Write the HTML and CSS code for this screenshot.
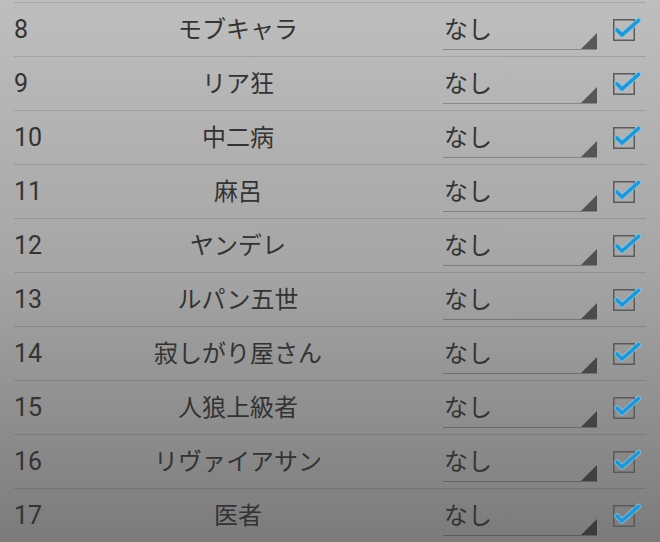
FILE: index.html
```html
<!DOCTYPE html>
<html lang="ja">
<head>
<meta charset="utf-8">
<link rel="stylesheet" href="styles.css">
</head>
<body>
<ul class="list">
  <li class="row"><span class="num">8</span><span class="name">モブキャラ</span><span class="select">なし</span><span class="check"><svg viewBox="0 0 22 22" width="22" height="22"><rect x="0.75" y="0.75" width="20.5" height="20.5"/><polyline class="glow" points="4,11 9,16 25.5,1.5"/><polyline class="mark" points="4,11 9,16 25.5,1.5"/></svg></span></li>
  <li class="row"><span class="num">9</span><span class="name">リア狂</span><span class="select">なし</span><span class="check"><svg viewBox="0 0 22 22" width="22" height="22"><rect x="0.75" y="0.75" width="20.5" height="20.5"/><polyline class="glow" points="4,11 9,16 25.5,1.5"/><polyline class="mark" points="4,11 9,16 25.5,1.5"/></svg></span></li>
  <li class="row"><span class="num">10</span><span class="name">中二病</span><span class="select">なし</span><span class="check"><svg viewBox="0 0 22 22" width="22" height="22"><rect x="0.75" y="0.75" width="20.5" height="20.5"/><polyline class="glow" points="4,11 9,16 25.5,1.5"/><polyline class="mark" points="4,11 9,16 25.5,1.5"/></svg></span></li>
  <li class="row"><span class="num">11</span><span class="name">麻呂</span><span class="select">なし</span><span class="check"><svg viewBox="0 0 22 22" width="22" height="22"><rect x="0.75" y="0.75" width="20.5" height="20.5"/><polyline class="glow" points="4,11 9,16 25.5,1.5"/><polyline class="mark" points="4,11 9,16 25.5,1.5"/></svg></span></li>
  <li class="row"><span class="num">12</span><span class="name">ヤンデレ</span><span class="select">なし</span><span class="check"><svg viewBox="0 0 22 22" width="22" height="22"><rect x="0.75" y="0.75" width="20.5" height="20.5"/><polyline class="glow" points="4,11 9,16 25.5,1.5"/><polyline class="mark" points="4,11 9,16 25.5,1.5"/></svg></span></li>
  <li class="row"><span class="num">13</span><span class="name">ルパン五世</span><span class="select">なし</span><span class="check"><svg viewBox="0 0 22 22" width="22" height="22"><rect x="0.75" y="0.75" width="20.5" height="20.5"/><polyline class="glow" points="4,11 9,16 25.5,1.5"/><polyline class="mark" points="4,11 9,16 25.5,1.5"/></svg></span></li>
  <li class="row"><span class="num">14</span><span class="name">寂しがり屋さん</span><span class="select">なし</span><span class="check"><svg viewBox="0 0 22 22" width="22" height="22"><rect x="0.75" y="0.75" width="20.5" height="20.5"/><polyline class="glow" points="4,11 9,16 25.5,1.5"/><polyline class="mark" points="4,11 9,16 25.5,1.5"/></svg></span></li>
  <li class="row"><span class="num">15</span><span class="name">人狼上級者</span><span class="select">なし</span><span class="check"><svg viewBox="0 0 22 22" width="22" height="22"><rect x="0.75" y="0.75" width="20.5" height="20.5"/><polyline class="glow" points="4,11 9,16 25.5,1.5"/><polyline class="mark" points="4,11 9,16 25.5,1.5"/></svg></span></li>
  <li class="row"><span class="num">16</span><span class="name">リヴァイアサン</span><span class="select">なし</span><span class="check"><svg viewBox="0 0 22 22" width="22" height="22"><rect x="0.75" y="0.75" width="20.5" height="20.5"/><polyline class="glow" points="4,11 9,16 25.5,1.5"/><polyline class="mark" points="4,11 9,16 25.5,1.5"/></svg></span></li>
  <li class="row"><span class="num">17</span><span class="name">医者</span><span class="select">なし</span><span class="check"><svg viewBox="0 0 22 22" width="22" height="22"><rect x="0.75" y="0.75" width="20.5" height="20.5"/><polyline class="glow" points="4,11 9,16 25.5,1.5"/><polyline class="mark" points="4,11 9,16 25.5,1.5"/></svg></span></li>
</ul>
</body>
</html>
```
FILE: styles.css
```css
html, body {
  margin: 0;
  padding: 0;
  height: 542px;
  overflow: hidden;
}
body {
  background: linear-gradient(to bottom, #bebebe 0%, #a5a5a5 50%, #7b7b7b 100%);
  font-family: Roboto, "Noto Sans CJK JP", sans-serif;
  color: #333;
}
.list {
  list-style: none;
  margin: 0;
  padding: 2px 14px 0 14px;
}
.row {
  display: flex;
  align-items: stretch;
  height: 53px;
  border-top: 1px solid rgba(0, 0, 0, 0.12);
}
.num {
  width: 46px;
  display: flex;
  align-items: center;
  font-family: Roboto, sans-serif;
  font-size: 25px;
}
.name {
  width: 356px;
  box-sizing: border-box;
  padding-bottom: 4px;
  display: flex;
  align-items: center;
  justify-content: center;
  font-family: "Noto Sans CJK JP", sans-serif;
  font-size: 24px;
}
.select {
  position: relative;
  width: 154px;
  margin: 6px 0 6px 27px;
  box-sizing: border-box;
  padding: 0 0 4px 1px;
  display: flex;
  align-items: center;
  border-bottom: 1px solid rgba(0, 0, 0, 0.25);
  font-family: "Noto Sans CJK JP", sans-serif;
  font-size: 24px;
}
.select::after {
  content: "";
  position: absolute;
  right: 0;
  bottom: 0;
  width: 16px;
  height: 16px;
  background: rgba(0, 0, 0, 0.52);
  clip-path: polygon(100% 0, 100% 100%, 0 100%);
}
.check {
  margin-left: 16px;
  display: flex;
  align-items: center;
}
.check svg {
  overflow: visible;
  display: block;
}
.check rect {
  fill: none;
  stroke: #5a5a5a;
  stroke-width: 1.5;
}
.check .glow {
  fill: none;
  stroke: rgba(120, 205, 245, 0.75);
  stroke-width: 5.5;
  stroke-linecap: round;
  stroke-linejoin: round;
}
.check .mark {
  fill: none;
  stroke: #2096d4;
  stroke-width: 3.6;
  stroke-linecap: round;
  stroke-linejoin: round;
}
```
